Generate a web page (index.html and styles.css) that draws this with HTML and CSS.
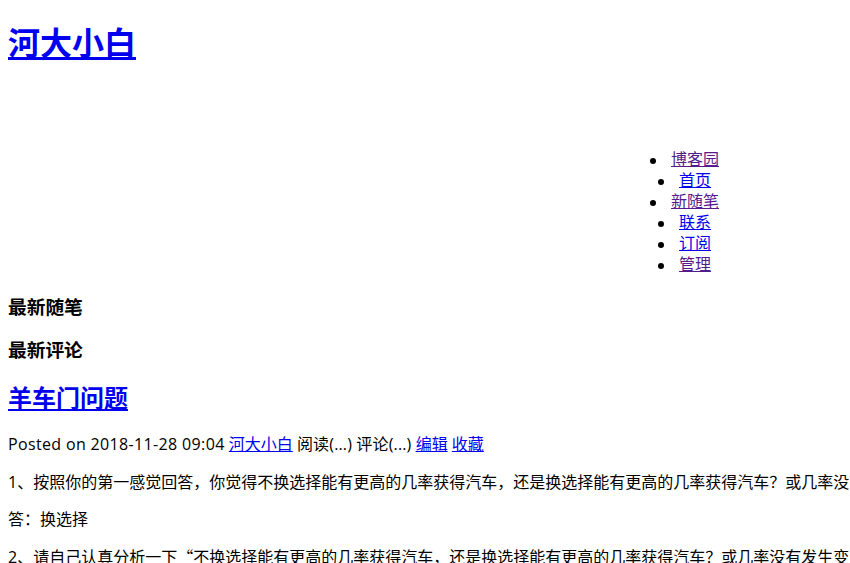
FILE: index.html
```html
<!DOCTYPE html>
<html lang="zh-CN">
<head>
<meta charset="utf-8">
<title>羊车门问题 - 河大小白</title>
<link rel="stylesheet" href="styles.css">
</head>
<body>
<div class="header">
  <h1 class="blog-title"><a href="#">河大小白</a></h1>
  <div class="subtitle"></div>
</div>
<div class="nav">
  <ul class="nav-list">
    <li><a class="visited" href="#">博客园</a></li>
    <li><a href="#">首页</a></li>
    <li><a class="visited" href="#">新随笔</a></li>
    <li><a href="#">联系</a></li>
    <li><a href="#">订阅</a></li>
    <li><a class="visited" href="#">管理</a></li>
  </ul>
</div>
<h3 class="side-title">最新随笔</h3>
<h3 class="side-title">最新评论</h3>
<div class="post">
  <h2 class="post-title"><a href="#">羊车门问题</a></h2>
  <div class="post-meta"><span class="latin">Posted on 2018-11-28 09:04</span> <a href="#">河大小白</a> <span class="counts">阅读(...) 评论(...)</span> <a href="#">编辑</a> <a href="#">收藏</a></div>
  <div class="post-body">
    <p>1、按照你的第一感觉回答，你觉得不换选择能有更高的几率获得汽车，还是换选择能有更高的几率获得汽车？或几率没有发生变化？</p>
    <p>答：换选择</p>
    <p>2、请自己认真分析一下<span class="cjk">“</span>不换选择能有更高的几率获得汽车，还是换选择能有更高的几率获得汽车？或几率没有发生变化？<span class="cjk">”</span>写出你分析的思路和结果。</p>
  </div>
</div>
</body>
</html>
```
FILE: styles.css
```css
html {
  overflow: hidden;
}
body {
  margin: 0;
  padding: 8px;
  font-family: "Open Sans", "Noto Sans CJK SC", sans-serif;
  font-size: 16px;
  line-height: 21px;
  color: #000;
  background: #fff;
}
a {
  color: #0000ee;
}
a.visited {
  color: #551a8b;
}
.blog-title {
  font-size: 32px;
  line-height: 42px;
  margin: 14px 0 21px;
}
.subtitle {
  height: 48px;
}
.nav-list {
  margin: 16px 0 16px auto;
  padding-left: 40px;
  width: 294px;
  text-align: center;
  list-style: none;
}
.nav-list li::before {
  content: "";
  display: inline-block;
  width: 6px;
  height: 6px;
  border-radius: 50%;
  background: #000;
  margin-left: -21px;
  margin-right: 15px;
  vertical-align: middle;
}
.side-title {
  font-size: 18.72px;
  line-height: 25px;
  margin: 18.72px 0;
}
.post-title {
  font-size: 24px;
  line-height: 32px;
  margin: 19.92px 0;
}
.latin {
  letter-spacing: 0.35px;
}
.counts {
  letter-spacing: 0.15px;
}
.cjk {
  font-family: "Noto Sans CJK SC", sans-serif;
}
.post-body {
  padding-top: 1px;
}
.post-body p {
  margin: 16px 0;
  white-space: nowrap;
}
```
